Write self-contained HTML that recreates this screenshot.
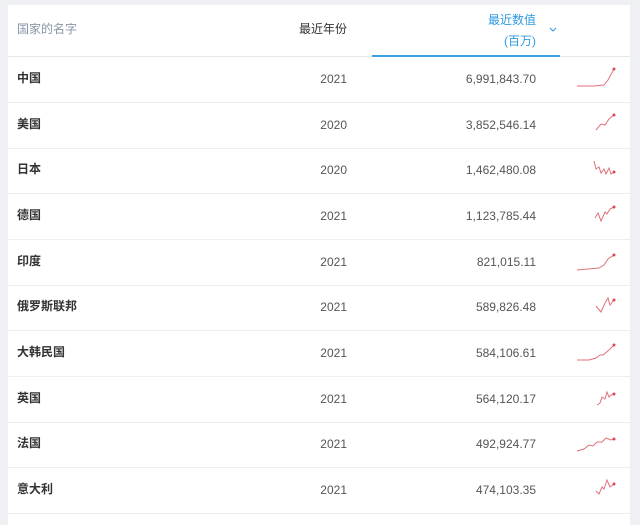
<!DOCTYPE html>
<html><head><meta charset="utf-8"><style>
body{margin:0;width:640px;height:514px;background:#eef0f4;font-family:"Liberation Sans","Noto Sans CJK SC",sans-serif;overflow:hidden;position:relative}
.card{position:absolute;left:8px;top:5px;width:622px;height:520px;background:#fff}
.hdr{position:absolute;left:0;top:0;width:622px;height:51px;border-bottom:1px solid #e4e7ec}
.t{position:absolute;font-size:12px;white-space:nowrap}
.row{position:absolute;left:8px;width:622px;height:45px;border-bottom:1px solid #eceef2}
.name{position:absolute;left:9px;top:13px;font-size:12px;font-weight:bold;color:#333;line-height:16px}
.yr{position:absolute;right:283px;top:15px;font-size:12px;color:#555}
.val{position:absolute;right:94px;top:15px;font-size:12px;color:#555}
svg.sp{position:absolute;left:566px;top:7px}
svg.sp path{stroke:#e0707a;stroke-width:1;fill:none}
svg.sp circle{fill:#d94a58}
</style></head><body>
<div class="card">
<div class="hdr">
<div class="t" style="left:9px;top:15px;color:#8a95a5">国家的名字</div>
<div class="t" style="right:283px;top:15px;color:#333">最近年份</div>
<div class="t" style="right:94px;top:6px;color:#2f9ae0">最近数值</div>
<div class="t" style="right:94px;top:27px;color:#2f9ae0">(百万)</div>
<svg style="position:absolute;left:541px;top:22px" width="8" height="6"><path d="M1 1 L4 4 L7 1" stroke="#2f9ae0" fill="none" stroke-width="1"/></svg>
<div style="position:absolute;left:364px;top:50px;width:188px;height:2px;background:#3a9fe3"></div>
</div>
</div>

<div class="row" style="top:57px"><div class="name">中国</div><div class="yr">2021</div><div class="val">6,991,843.70</div><svg class="sp" width="44" height="28"><path d="M3 22 L20 22 L30 21 L34 16 L40 5"/><circle cx="40" cy="5" r="1.5"/></svg></div>
<div class="row" style="top:103px"><div class="name">美国</div><div class="yr">2020</div><div class="val">3,852,546.14</div><svg class="sp" width="44" height="28"><path d="M22 20 L27 14 L31 15 L35 9 L40 5"/><circle cx="40" cy="5" r="1.5"/></svg></div>
<div class="row" style="top:148px"><div class="name">日本</div><div class="yr">2020</div><div class="val">1,462,480.08</div><svg class="sp" width="44" height="28"><path d="M20 6 L22 14 L25 12 L27 18 L30 14 L32 19 L35 13 L37 19 L40 17"/><circle cx="40" cy="17" r="1.5"/></svg></div>
<div class="row" style="top:194px"><div class="name">德国</div><div class="yr">2021</div><div class="val">1,123,785.44</div><svg class="sp" width="44" height="28"><path d="M21 17 L24 12 L27 20 L31 11 L33 13 L36 8 L40 6"/><circle cx="40" cy="6" r="1.5"/></svg></div>
<div class="row" style="top:240px"><div class="name">印度</div><div class="yr">2021</div><div class="val">821,015.11</div><svg class="sp" width="44" height="28"><path d="M3 23 L25 21 L30 18 L34 12 L40 8"/><circle cx="40" cy="8" r="1.5"/></svg></div>
<div class="row" style="top:285px"><div class="name">俄罗斯联邦</div><div class="yr">2021</div><div class="val">589,826.48</div><svg class="sp" width="44" height="28"><path d="M22 14 L27 20 L31 11 L34 6 L36 13 L40 8"/><circle cx="40" cy="8" r="1.5"/></svg></div>
<div class="row" style="top:331px"><div class="name">大韩民国</div><div class="yr">2021</div><div class="val">584,106.61</div><svg class="sp" width="44" height="28"><path d="M3 22 L15 22 L22 20 L26 17 L29 17 L35 12 L40 7"/><circle cx="40" cy="7" r="1.5"/></svg></div>
<div class="row" style="top:377px"><div class="name">英国</div><div class="yr">2021</div><div class="val">564,120.17</div><svg class="sp" width="44" height="28"><path d="M23 21 L26 19 L28 13 L31 15 L33 8 L35 13 L37 11 L40 10"/><circle cx="40" cy="10" r="1.5"/></svg></div>
<div class="row" style="top:422px"><div class="name">法国</div><div class="yr">2021</div><div class="val">492,924.77</div><svg class="sp" width="44" height="28"><path d="M3 22 L10 20 L15 16 L19 17 L23 13 L28 13 L32 9 L37 11 L40 10"/><circle cx="40" cy="10" r="1.5"/></svg></div>
<div class="row" style="top:468px"><div class="name">意大利</div><div class="yr">2021</div><div class="val">474,103.35</div><svg class="sp" width="44" height="28"><path d="M22 16 L25 19 L28 12 L30 14 L33 5 L36 12 L40 9"/><circle cx="40" cy="9" r="1.5"/></svg></div>
</body></html>
